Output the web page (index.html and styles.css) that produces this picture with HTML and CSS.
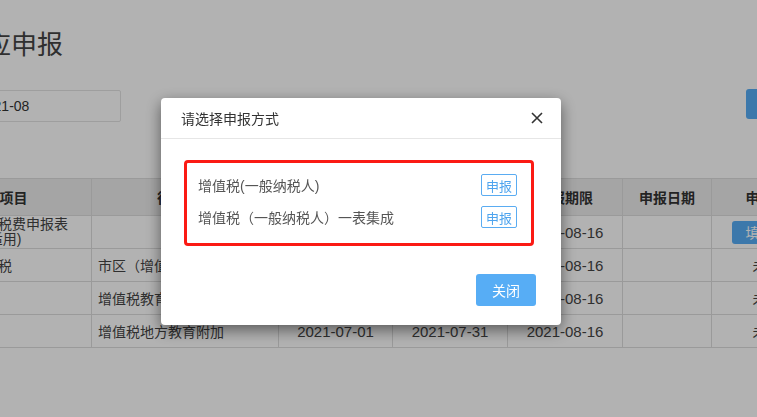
FILE: index.html
```html
<!DOCTYPE html>
<html lang="zh-CN">
<head>
  <meta charset="UTF-8">
  <meta name="viewport" content="width=device-width, initial-scale=1.0">
  <title>应申报</title>
  <link rel="stylesheet" href="styles.css">
</head>
<body>
    <div class="page">
        <h2 class="page-title">纳税人应申报</h2>
        <div class="filter-row">
            <label class="filter-label">所属月份</label>
            <input type="text" class="month-input" value="2021-08" />
            <button class="btn-blue btn-query">查询</button>
        </div>

        <table class="tax-table">
            <colgroup>
                <col style="width:184px">
                <col style="width:187px">
                <col style="width:114px">
                <col style="width:115px">
                <col style="width:115px">
                <col style="width:89px">
                <col style="width:124px">
            </colgroup>
            <thead>
                <tr>
                    <th>征收项目</th>
                    <th>征收品目</th>
                    <th>所属期起</th>
                    <th>所属期止</th>
                    <th>申报期限</th>
                    <th>申报日期</th>
                    <th>申报操作</th>
                </tr>
            </thead>
            <tbody>
                <tr>
                    <td class="left two-line">增值税及附加税费申报表<br />(一般纳税人适用)</td>
                    <td></td>
                    <td class="date">2021-07-01</td>
                    <td class="date">2021-07-31</td>
                    <td class="date">2021-08-16</td>
                    <td></td>
                    <td><button class="btn-blue btn-fill">填写申报</button></td>
                </tr>
                <tr>
                    <td class="left">城市维护建设税</td>
                    <td class="left">市区（增值税附加）</td>
                    <td class="date">2021-07-01</td>
                    <td class="date">2021-07-31</td>
                    <td class="date">2021-08-16</td>
                    <td></td>
                    <td>未申报</td>
                </tr>
                <tr>
                    <td class="left"></td>
                    <td class="left">增值税教育费附加</td>
                    <td class="date">2021-07-01</td>
                    <td class="date">2021-07-31</td>
                    <td class="date">2021-08-16</td>
                    <td></td>
                    <td>未申报</td>
                </tr>
                <tr>
                    <td class="left"></td>
                    <td class="left">增值税地方教育附加</td>
                    <td class="date">2021-07-01</td>
                    <td class="date">2021-07-31</td>
                    <td class="date">2021-08-16</td>
                    <td></td>
                    <td>未申报</td>
                </tr>
            </tbody>
        </table>
    </div>

    <div class="mask"></div>

    <div class="modal">
        <div class="modal-header">
            <span class="modal-title">请选择申报方式</span>
            <span class="modal-close">
                <svg width="12" height="12" viewBox="0 0 12 12">
                    <path d="M1 1 L11 11 M11 1 L1 11" stroke="#333" stroke-width="1.6" fill="none" />
                </svg>
            </span>
        </div>
        <div class="modal-body">
            <div class="choice-box">
                <div class="choice-row">
                    <span>增值税(一般纳税人)</span>
                    <button class="btn-line">申报</button>
                </div>
                <div class="choice-row">
                    <span>增值税<span class="fw-paren">（</span>一般纳税人<span class="fw-paren">）</span>一表集成</span>
                    <button class="btn-line">申报</button>
                </div>
            </div>
        </div>
        <div class="modal-footer">
            <button class="btn-blue btn-close">关闭</button>
        </div>
    </div>
</body>
</html>
```

FILE: styles.css
```css
* {
    margin: 0;
    padding: 0;
    box-sizing: border-box;
    font-family: "Liberation Sans", "Noto Sans CJK SC", sans-serif;
}
body {
    background: #fff;
    overflow: hidden;
    height: 100vh;
    color: #333;
    font-size: 14px;
}
/* page is scrolled sideways in the shot */
.page {
    width: 968px;
    margin-left: -113px;
    padding: 27px 20px 0 20px;
}
.page-title {
    font-size: 26px;
    line-height: 36px;
    font-weight: normal;
    color: #444;
}
.filter-row {
    display: flex;
    align-items: flex-start;
    margin-top: 26px;
}
.filter-label {
    width: 56px;
    margin-right: 7px;
    line-height: 32px;
    margin-top: 1px;
}
.month-input {
    width: 151px;
    height: 32px;
    margin-top: 1px;
    padding: 0 7px;
    border: 1px solid #e2e2e2;
    border-radius: 2px;
    font-size: 14px;
    color: #333;
}
.btn-blue {
    background: #57adf5;
    color: #fff;
    border: none;
    border-radius: 3px;
    font-size: 14px;
    cursor: pointer;
}
.btn-query {
    margin-left: auto;
    width: 89px;
    height: 30px;
}
.tax-table {
    width: 100%;
    margin-top: 56px;
    border-collapse: collapse;
    table-layout: fixed;
}
.tax-table th {
    height: 37px;
    background: #ededed;
    border: 1px solid #ddd;
    font-weight: bold;
    color: #333;
}
.tax-table td {
    height: 33px;
    border: 1px solid #ddd;
    text-align: center;
    color: #444;
    padding: 0 6px;
}
.tax-table td.left {
    text-align: left;
}
.tax-table td.two-line {
    line-height: 15px;
    white-space: nowrap;
}
.tax-table td.date {
    font-size: 15px;
}
.btn-fill {
    height: 23px;
    padding: 0 14px;
}
.mask {
    position: fixed;
    top: 0;
    left: 0;
    width: 100%;
    height: 100%;
    background: rgba(0, 0, 0, 0.3);
}
.modal {
    position: fixed;
    top: 98px;
    left: 161px;
    width: 400px;
    background: #fff;
    border-radius: 4px;
    box-shadow: 0 5px 15px rgba(0, 0, 0, 0.5);
}
.modal-header {
    height: 41px;
    padding: 0 18px 0 20px;
    border-bottom: 1px solid #e6e6e6;
    display: flex;
    align-items: center;
    justify-content: space-between;
}
.modal-title {
    font-size: 14px;
    color: #333;
}
.modal-close {
    display: flex;
    cursor: pointer;
}
.modal-body {
    padding: 21px 27px 0 23px;
}
.choice-box {
    border: 3px solid #fb1a14;
    border-radius: 4px;
    padding: 6px 14px 10px 11px;
}
.choice-row {
    height: 32px;
    display: flex;
    align-items: center;
    justify-content: space-between;
    color: #555;
}
.fw-paren {
    display: inline-block;
    width: 14px;
    text-align: center;
    font-family: "Liberation Sans", sans-serif;
}
.btn-line {
    width: 36px;
    height: 22px;
    background: #fff;
    border: 1px solid #5aacf2;
    border-radius: 2px;
    color: #4ea4ee;
    font-size: 13px;
}
.modal-footer {
    display: flex;
    justify-content: flex-end;
    padding: 28px 25px 19px 0;
}
.btn-close {
    width: 60px;
    height: 32px;
}
```
